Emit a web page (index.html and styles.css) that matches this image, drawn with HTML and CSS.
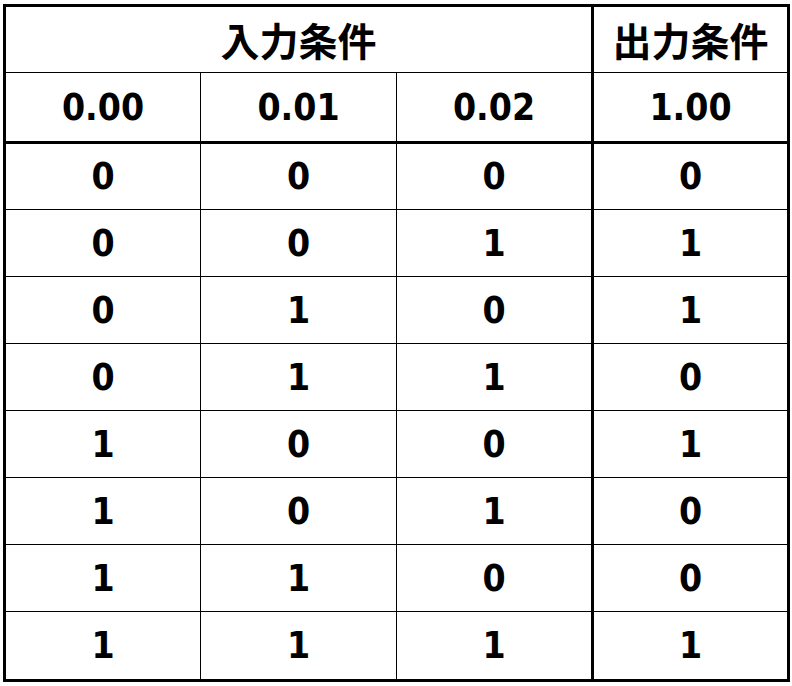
FILE: index.html
```html
<!DOCTYPE html>
<html lang="ja">
<head>
<meta charset="utf-8">
<link rel="stylesheet" href="styles.css">
</head>
<body>
<div class="truth">
  <div class="cell head span3">入力条件</div>
  <div class="cell head last">出力条件</div>

  <div class="cell sub">0.00</div>
  <div class="cell sub">0.01</div>
  <div class="cell sub thickr">0.02</div>
  <div class="cell sub last">1.00</div>

  <div class="cell">0</div><div class="cell">0</div><div class="cell thickr">0</div><div class="cell last">0</div>
  <div class="cell">0</div><div class="cell">0</div><div class="cell thickr">1</div><div class="cell last">1</div>
  <div class="cell">0</div><div class="cell">1</div><div class="cell thickr">0</div><div class="cell last">1</div>
  <div class="cell">0</div><div class="cell">1</div><div class="cell thickr">1</div><div class="cell last">0</div>
  <div class="cell">1</div><div class="cell">0</div><div class="cell thickr">0</div><div class="cell last">1</div>
  <div class="cell">1</div><div class="cell">0</div><div class="cell thickr">1</div><div class="cell last">0</div>
  <div class="cell">1</div><div class="cell">1</div><div class="cell thickr">0</div><div class="cell last">0</div>
  <div class="cell bottom">1</div><div class="cell bottom">1</div><div class="cell thickr bottom">1</div><div class="cell last bottom">1</div>
</div>
</body>
</html>
```

FILE: styles.css
```css
html, body {
  margin: 0;
  padding: 0;
  background: #ffffff;
}

body {
  padding: 4px 0 0 3px;
}

.truth {
  width: 787px;
  box-sizing: border-box;
  border: 3px solid #000;
  display: grid;
  grid-template-columns: 195px 196px 197px 193px;
  grid-template-rows: 66px 71px 66px 67px 67px 67px 67px 67px 67px 67px;
  font-family: "DejaVu Sans Condensed", "DejaVu Sans", sans-serif;
  font-stretch: condensed;
  font-weight: bold;
  font-size: 37px;
  color: #000;
}

.cell {
  display: flex;
  align-items: center;
  justify-content: center;
  border-right: 1px solid #000;
  border-bottom: 1px solid #000;
  line-height: 1;
}

.head {
  font-family: "Noto Sans CJK JP", sans-serif;
  font-stretch: normal;
  font-size: 39px;
}

.span3 {
  grid-column: span 3;
  border-right: 3px solid #000;
}

.sub {
  border-bottom: 3px solid #000;
}

.thickr {
  border-right: 3px solid #000;
}

.last {
  border-right: none;
}

.bottom {
  border-bottom: none;
}
```
